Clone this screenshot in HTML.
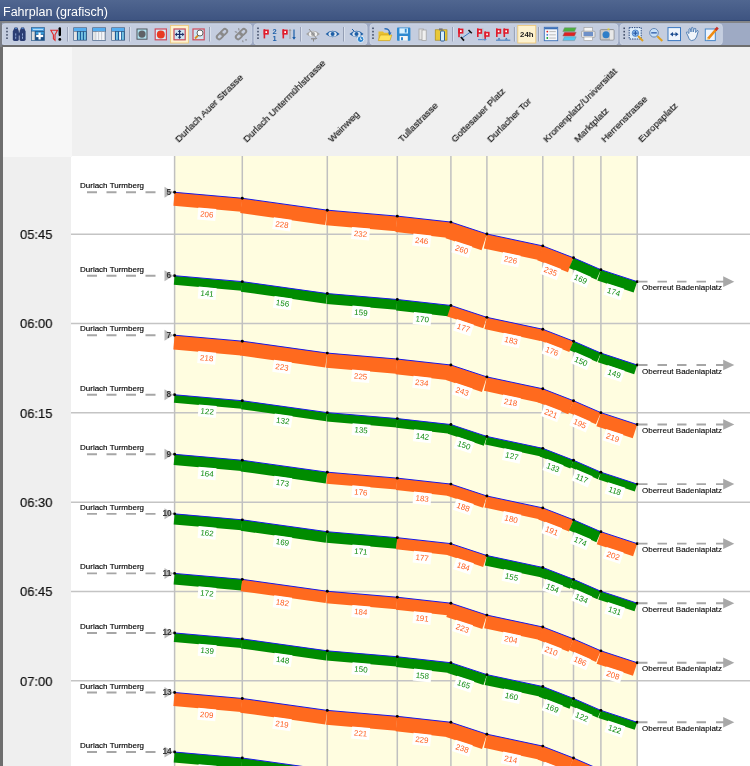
<!DOCTYPE html>
<html><head><meta charset="utf-8"><style>
*{margin:0;padding:0;box-sizing:border-box}
html,body{width:750px;height:766px;overflow:hidden;background:#fff;font-family:"Liberation Sans",sans-serif}
#title{position:absolute;left:0;top:0;width:750px;height:21px;background:linear-gradient(#506690,#3e5481 95%,#2f4570 95%);color:#fff;font-size:12.5px;line-height:25px;padding-left:3px}
#tbline{position:absolute;left:0;top:21px;width:750px;height:2px;background:#838588}
#toolbar{position:absolute;left:0;top:23px;width:750px;height:23px;background:#9eaac4}
#tbbottom{position:absolute;left:0;top:45px;width:750px;height:2px;background:#6e6e6e}
#leftborder{position:absolute;left:0;top:47px;width:3px;height:719px;background:#6e6e6e}
#lefthdr{position:absolute;left:3px;top:47px;width:69px;height:110px;background:#f7f7f7}
#hdr{position:absolute;left:72px;top:47px;width:678px;height:109px;background:#f0f0f0}
#leftaxis{position:absolute;left:3px;top:157px;width:68px;height:609px;background:#efefef}
.st{position:absolute;font-size:9.7px;line-height:12px;white-space:nowrap;color:#111;-webkit-text-stroke:0.18px #111;transform-origin:0 100%;transform:rotate(-45deg);will-change:transform}
.tm{position:absolute;left:20.3px;font-size:13.5px;line-height:16px;color:#101010;transform:scaleX(0.96);transform-origin:0 0;will-change:transform;-webkit-text-stroke:0.2px #101010}
text{font-family:"Liberation Sans",sans-serif}
</style></head><body>
<div id="title"><span style="display:inline-block;will-change:transform">Fahrplan (grafisch)</span></div>
<div id="tbline"></div>
<div id="toolbar"></div>
<svg width="750" height="47" viewBox="0 0 750 47" style="position:absolute;left:0;top:0;will-change:transform">
<rect x="2" y="23.9" width="249.7" height="20.8" rx="3" fill="#c4cddf" stroke="#d2d9e7" stroke-width="0.8"/>
<rect x="254" y="23.9" width="113.0" height="20.8" rx="3" fill="#c4cddf" stroke="#d2d9e7" stroke-width="0.8"/>
<rect x="370" y="23.9" width="247.8" height="20.8" rx="3" fill="#c4cddf" stroke="#d2d9e7" stroke-width="0.8"/>
<rect x="620.2" y="23.9" width="102.1" height="20.8" rx="3" fill="#c4cddf" stroke="#d2d9e7" stroke-width="0.8"/>
<rect x="6.2" y="27.5" width="1.6" height="1.6" fill="#44506a"/>
<rect x="6.2" y="30.8" width="1.6" height="1.6" fill="#44506a"/>
<rect x="6.2" y="34.1" width="1.6" height="1.6" fill="#44506a"/>
<rect x="6.2" y="37.400000000000006" width="1.6" height="1.6" fill="#44506a"/>
<rect x="257.2" y="27.5" width="1.6" height="1.6" fill="#44506a"/>
<rect x="257.2" y="30.8" width="1.6" height="1.6" fill="#44506a"/>
<rect x="257.2" y="34.1" width="1.6" height="1.6" fill="#44506a"/>
<rect x="257.2" y="37.400000000000006" width="1.6" height="1.6" fill="#44506a"/>
<rect x="372.2" y="27.5" width="1.6" height="1.6" fill="#44506a"/>
<rect x="372.2" y="30.8" width="1.6" height="1.6" fill="#44506a"/>
<rect x="372.2" y="34.1" width="1.6" height="1.6" fill="#44506a"/>
<rect x="372.2" y="37.400000000000006" width="1.6" height="1.6" fill="#44506a"/>
<rect x="623.4000000000001" y="27.5" width="1.6" height="1.6" fill="#44506a"/>
<rect x="623.4000000000001" y="30.8" width="1.6" height="1.6" fill="#44506a"/>
<rect x="623.4000000000001" y="34.1" width="1.6" height="1.6" fill="#44506a"/>
<rect x="623.4000000000001" y="37.400000000000006" width="1.6" height="1.6" fill="#44506a"/>
<rect x="67.2" y="27" width="1" height="14.5" fill="#8f9ab0"/><rect x="68.2" y="27" width="0.8" height="14.5" fill="#e0e6f0"/>
<rect x="129.1" y="27" width="1" height="14.5" fill="#8f9ab0"/><rect x="130.1" y="27" width="0.8" height="14.5" fill="#e0e6f0"/>
<rect x="209.1" y="27" width="1" height="14.5" fill="#8f9ab0"/><rect x="210.1" y="27" width="0.8" height="14.5" fill="#e0e6f0"/>
<rect x="300.2" y="27" width="1" height="14.5" fill="#8f9ab0"/><rect x="301.2" y="27" width="0.8" height="14.5" fill="#e0e6f0"/>
<rect x="343.1" y="27" width="1" height="14.5" fill="#8f9ab0"/><rect x="344.1" y="27" width="0.8" height="14.5" fill="#e0e6f0"/>
<rect x="452.2" y="27" width="1" height="14.5" fill="#8f9ab0"/><rect x="453.2" y="27" width="0.8" height="14.5" fill="#e0e6f0"/>
<rect x="513.9" y="27" width="1" height="14.5" fill="#8f9ab0"/><rect x="514.9" y="27" width="0.8" height="14.5" fill="#e0e6f0"/>
<rect x="538.2" y="27" width="1" height="14.5" fill="#8f9ab0"/><rect x="539.2" y="27" width="0.8" height="14.5" fill="#e0e6f0"/>
<g fill="#2b3d73"><path d="M14.6,27.6 L17.4,27.6 L18.8,31 L18.8,39.6 Q18.8,41 17.4,41 L14.4,41 Q12.8,41 12.8,39.6 L12.8,31.5 Z"/><path d="M21.2,27.6 L24,27.6 L25.6,31.5 L25.6,39.6 Q25.6,41 24,41 L21,41 Q19.6,41 19.6,39.6 L19.6,31 Z"/><rect x="18" y="32.5" width="2.4" height="3"/></g><g fill="#8fa8d8"><rect x="15.2" y="33.4" width="1" height="2.2"/><rect x="15.2" y="36.6" width="1" height="2.2"/><rect x="22" y="33.4" width="1" height="2.2"/><rect x="22" y="36.6" width="1" height="2.2"/><rect x="15" y="27.9" width="2" height="1" fill="#4f8ad0"/><rect x="21.6" y="27.9" width="2" height="1" fill="#4f8ad0"/></g>
<g><rect x="31" y="27.2" width="13.8" height="13.6" fill="#2f5e8c"/><rect x="31.7" y="27.8" width="12.4" height="3" fill="#4aa4e8"/><rect x="33" y="28.9" width="10" height="0.9" fill="#c8eaff"/><rect x="31.7" y="31.5" width="3" height="8.6" fill="#dcdcdc"/><rect x="35.5" y="31.5" width="8.6" height="8.6" fill="#1a4f86"/><rect x="35.8" y="31.8" width="3.6" height="2.6" fill="#3a9ad8"/><rect x="40.2" y="31.8" width="3.6" height="2.6" fill="#3a9ad8"/><rect x="38.5" y="32.5" width="2.2" height="7" fill="#fff"/><rect x="36.2" y="34.9" width="7" height="2.2" fill="#fff"/></g>
<g><path d="M50.8,30.2 L57.5,30.2 L55,34.8 L55,40.2 L53.4,38.8 L53.4,34.8 Z" fill="none" stroke="#e02828" stroke-width="1.1"/><rect x="58.6" y="27.2" width="2.4" height="9" rx="1.1" fill="#000"/><circle cx="59.8" cy="39.4" r="1.4" fill="#000"/></g>
<g><rect x="73.3" y="27.4" width="13.6" height="13.2" fill="#3a5a80"/><rect x="73.89999999999999" y="28" width="12.4" height="3" fill="#56aef0"/><rect x="73.89999999999999" y="31.6" width="3" height="8.4" fill="#e4e4e4"/><rect x="77.1" y="31.6" width="9.2" height="8.4" fill="#1a5c9c"/><rect x="78.3" y="31.8" width="1.3" height="8" fill="#9ff0ff"/><rect x="81.3" y="31.8" width="1.3" height="8" fill="#9ff0ff"/><rect x="84.3" y="31.8" width="1.3" height="8" fill="#9ff0ff"/></g>
<g><rect x="92.3" y="27.4" width="13.6" height="13.2" fill="#3a5a80"/><rect x="92.89999999999999" y="28" width="12.4" height="3" fill="#56aef0"/><rect x="92.89999999999999" y="31.6" width="3" height="8.4" fill="#e4e4e4"/><rect x="96.1" y="31.6" width="9.2" height="8.4" fill="#f4f6fa"/><rect x="98.3" y="31.8" width="0.8" height="8" fill="#b8bcc4"/><rect x="101.3" y="31.8" width="0.8" height="8" fill="#b8bcc4"/><rect x="104.3" y="31.8" width="0.8" height="8" fill="#b8bcc4"/></g>
<g><rect x="111.3" y="27.4" width="13.6" height="13.2" fill="#3a5a80"/><rect x="111.89999999999999" y="28" width="12.4" height="3" fill="#56aef0"/><rect x="111.89999999999999" y="31.6" width="3" height="8.4" fill="#e4e4e4"/><rect x="115.1" y="31.6" width="9.2" height="8.4" fill="#1a5c9c"/><rect x="119.1" y="31.8" width="2" height="8" fill="#f4f6fa"/><rect x="116.3" y="31.8" width="1.3" height="8" fill="#9ff0ff"/><rect x="122.3" y="31.8" width="1.3" height="8" fill="#9ff0ff"/></g>
<g><rect x="137" y="29" width="10" height="10.2" fill="#aee0ee" stroke="#50585e" stroke-width="1"/><circle cx="142" cy="34.1" r="3.6" fill="#5e6266"/></g>
<g><rect x="155.2" y="29" width="11.2" height="10.8" fill="#d8eef8" stroke="#d04a5a" stroke-width="1.2"/><circle cx="160.8" cy="34.4" r="4" fill="#e83a22"/></g>
<rect x="170.6" y="25.4" width="17.8" height="17.6" fill="#fdf2cf" stroke="#efc878" stroke-width="0.9"/>
<g><rect x="174" y="29" width="11.2" height="10.8" fill="#cfe6f4" stroke="#c84a5a" stroke-width="1.2"/><path d="M179.6,29.8 L181.4,32 L177.8,32 Z M179.6,39 L181.4,36.8 L177.8,36.8 Z M174.8,34.4 L177,32.6 L177,36.2 Z M184.4,34.4 L182.2,32.6 L182.2,36.2 Z" fill="#1c2e66"/><rect x="179" y="31.5" width="1.2" height="6" fill="#1c2e66"/><rect x="176.5" y="33.8" width="6.2" height="1.2" fill="#1c2e66"/></g>
<g><rect x="193" y="29" width="11.2" height="10.8" fill="#cfe6f4" stroke="#d04a5a" stroke-width="1.2"/><line x1="195" y1="38.5" x2="198" y2="35.5" stroke="#d8901c" stroke-width="1.8"/><circle cx="200" cy="33" r="3" fill="#fff" stroke="#555" stroke-width="0.9"/></g>
<g fill="none" stroke="#8a8a8a" stroke-width="1.9"><rect x="221.7" y="28.6" width="4.6" height="7" rx="2.2" transform="rotate(45 224.0 32.1)"/><rect x="217.7" y="32.6" width="4.6" height="7" rx="2.2" transform="rotate(45 220.0 36.1)"/></g>
<g fill="none" stroke="#8a8a8a" stroke-width="1.9"><rect x="240.7" y="28.6" width="4.6" height="7" rx="2.2" transform="rotate(45 243.0 32.1)"/><rect x="236.7" y="32.6" width="4.6" height="7" rx="2.2" transform="rotate(45 239.0 36.1)"/></g><g stroke="#7c7c7c" stroke-width="0.9"><line x1="234.8" y1="31.7" x2="237.2" y2="32.3"/><line x1="238.7" y1="28.2" x2="239.0" y2="30.5"/><line x1="245.1" y1="39.9" x2="247.0" y2="39.9"/><line x1="242.7" y1="40.4" x2="243.0" y2="42.2"/></g>
<g><rect x="263.6" y="29.2" width="1.6" height="9.2" fill="#e01c2c"/><rect x="263.6" y="29.599999999999998" width="5.2" height="5" fill="#e01c2c"/><rect x="265.40000000000003" y="31.2" width="1.7" height="1.8" fill="#fff"/><text x="274.6" y="34" font-size="7.5" font-weight="bold" text-anchor="middle" fill="#1c5ea8">2</text><text x="274.6" y="40.5" font-size="7.5" font-weight="bold" text-anchor="middle" fill="#1c5ea8">1</text></g>
<g><rect x="282.5" y="29.2" width="1.6" height="9.2" fill="#e01c2c"/><rect x="282.5" y="29.599999999999998" width="5.2" height="5" fill="#e01c2c"/><rect x="284.3" y="31.2" width="1.7" height="1.8" fill="#fff"/><line x1="290" y1="29.5" x2="290" y2="39" stroke="#a0a0a0" stroke-width="1.1"/><path d="M288.4,31 L290,28.8 L291.6,31 Z" fill="#a0a0a0"/><line x1="294" y1="29.5" x2="294" y2="38.5" stroke="#1c5ea8" stroke-width="1.2"/><path d="M292.2,37 L294,39.8 L295.8,37 Z" fill="#1c5ea8"/></g>
<g><path d="M306,34 Q313,27.5 320,34 Q313,40.5 306,34 Z" fill="#a4a4a4"/><ellipse cx="313" cy="34" rx="4.2" ry="2.6" fill="#fff" opacity="0.85"/><circle cx="313" cy="34" r="2" fill="#a4a4a4"/><line x1="309" y1="29" x2="317" y2="39" stroke="#8c8c8c" stroke-width="1"/><rect x="311" y="38.2" width="5" height="1.2" fill="#888"/><rect x="313" y="39" width="1" height="2.5" fill="#888"/></g>
<g><path d="M325.6,34 Q332.6,27.5 339.6,34 Q332.6,40.5 325.6,34 Z" fill="#1d5ea6"/><ellipse cx="332.6" cy="34" rx="4.2" ry="2.6" fill="#fff" opacity="0.85"/><circle cx="332.6" cy="34" r="2" fill="#1d5ea6"/></g>
<g><path d="M349.5,34 Q356.5,27.5 363.5,34 Q356.5,40.5 349.5,34 Z" fill="#1d5ea6"/><ellipse cx="356.5" cy="34" rx="4.2" ry="2.6" fill="#fff" opacity="0.85"/><circle cx="356.5" cy="34" r="2" fill="#1d5ea6"/><line x1="352" y1="29" x2="354" y2="31" stroke="#1d5ea6" stroke-width="1"/><circle cx="360.6" cy="39.2" r="3.3" fill="#2f86d0" stroke="#fff" stroke-width="0.8"/><path d="M360.6,37.4 L360.6,39.4 L362,39.4" stroke="#fff" stroke-width="0.8" fill="none"/></g>
<g><path d="M378.5,31.5 L383,31.5 L384,32.7 L389,32.7 L389,40.5 L378.5,40.5 Z" fill="#e8c030"/><path d="M378.3,40.6 L380.3,35 L391.8,35 L390,40.6 Z" fill="#ffe35a" stroke="#c99a10" stroke-width="0.6"/><path d="M384.5,28.8 Q389.5,28.5 389.8,33.5" fill="none" stroke="#2f6fb8" stroke-width="1.4"/><path d="M387.8,32.6 L391.6,32.6 L389.7,35.6 Z" fill="#2f6fb8"/></g>
<g><rect x="397" y="27.6" width="13.4" height="13.2" rx="0.8" fill="#2f8ad0"/><rect x="399.4" y="28.3" width="8.6" height="5.2" fill="#d6f0ff"/><rect x="404.8" y="28.8" width="1.8" height="3.8" fill="#2f8ad0"/><rect x="399.6" y="36" width="8.2" height="4.8" fill="#f4f4f4"/><rect x="401" y="37.2" width="2" height="3" fill="#2f8ad0"/></g>
<g><rect x="419" y="29" width="4.5" height="10.8" fill="#e4e4e4" stroke="#a4a4a4" stroke-width="0.8"/><rect x="422" y="30" width="4.2" height="10.4" fill="#f0f0f0" stroke="#a4a4a4" stroke-width="0.8"/></g>
<g><rect x="435.2" y="29.8" width="11.8" height="10.4" fill="#e8c838" stroke="#a08010" stroke-width="0.6"/><rect x="439" y="28.4" width="3.6" height="2" fill="#777"/><rect x="440.5" y="31" width="4" height="10" rx="1" fill="#d4efff" stroke="#1e5090" stroke-width="0.9"/></g>
<g><rect x="458.2" y="28.2" width="1.6" height="9" fill="#e01c2c"/><rect x="458.2" y="28.599999999999998" width="5.2" height="5" fill="#e01c2c"/><rect x="460.0" y="30.2" width="1.7" height="1.8" fill="#fff"/><line x1="462" y1="38" x2="470.5" y2="32" stroke="#3878c0" stroke-width="1"/><line x1="460.8" y1="37" x2="464" y2="40.6" stroke="#111" stroke-width="1.6"/><line x1="468.5" y1="30" x2="471.8" y2="33.2" stroke="#111" stroke-width="1.6"/></g>
<g><rect x="477" y="28.4" width="1.6" height="8.6" fill="#e01c2c"/><rect x="477" y="28.799999999999997" width="5.2" height="5" fill="#e01c2c"/><rect x="478.8" y="30.4" width="1.7" height="1.8" fill="#fff"/><rect x="484.4" y="31.4" width="1.6" height="8.6" fill="#e01c2c"/><rect x="484.4" y="31.799999999999997" width="5.2" height="5" fill="#e01c2c"/><rect x="486.2" y="33.4" width="1.7" height="1.8" fill="#fff"/><line x1="478" y1="39.6" x2="485" y2="39.6" stroke="#5a8ed0" stroke-width="1.1"/><path d="M484.5,38.2 L486.8,39.6 L484.5,41 Z" fill="#5a8ed0"/><line x1="482.8" y1="28" x2="482.8" y2="41" stroke="#b0b0b0" stroke-width="0.5"/></g>
<g><rect x="496" y="28.4" width="1.6" height="8.6" fill="#e01c2c"/><rect x="496" y="28.799999999999997" width="5.2" height="5" fill="#e01c2c"/><rect x="497.8" y="30.4" width="1.7" height="1.8" fill="#fff"/><rect x="503.5" y="28.4" width="1.6" height="8.6" fill="#e01c2c"/><rect x="503.5" y="28.799999999999997" width="5.2" height="5" fill="#e01c2c"/><rect x="505.3" y="30.4" width="1.7" height="1.8" fill="#fff"/><line x1="496" y1="40.2" x2="510.3" y2="40.2" stroke="#2f6fb8" stroke-width="0.9"/><path d="M497.5,39.5 L499,37.8 L500.5,39.5 Z M504.8,39.5 L506.3,37.8 L507.8,39.5 Z" fill="#2f6fb8"/></g>
<rect x="517.8" y="25.4" width="18" height="17.6" fill="#fdf2cf" stroke="#efc878" stroke-width="0.9"/><text x="526.8" y="37.4" font-size="7.8" font-weight="bold" text-anchor="middle" fill="#1a1a1a">24h</text>
<g><rect x="544.3" y="27.3" width="13.4" height="13.4" fill="#f4f6fa" stroke="#3c70b8" stroke-width="0.9"/><rect x="544.5" y="27.5" width="13" height="1.8" fill="#3c70b8"/><circle cx="547.3" cy="31.6" r="0.9" fill="#e02020"/><circle cx="547.3" cy="34.8" r="0.9" fill="#3c70d0"/><circle cx="547.3" cy="38" r="0.9" fill="#10a020"/><rect x="549.3" y="31.2" width="6.5" height="0.9" fill="#b4b4b4"/><rect x="549.3" y="34.4" width="6.5" height="0.9" fill="#b4b4b4"/><rect x="549.3" y="37.6" width="6.5" height="0.9" fill="#b4b4b4"/></g>
<g><path d="M564.5,27.7 L576.2,27.7 L574.5,31.5 L562.8,31.5 Z" fill="#4cb040" stroke="#7a8a78" stroke-width="0.5"/><path d="M564.5,32.2 L576.2,32.2 L574.5,36 L562.8,36 Z" fill="#e02020" stroke="#7a7a7a" stroke-width="0.5"/><path d="M564.5,36.8 L576.2,36.8 L574.5,40.6 L562.8,40.6 Z" fill="#50c8f0" stroke="#7a8a9a" stroke-width="0.5"/></g>
<g><rect x="584" y="27.5" width="8.5" height="4" fill="#f4f4f4" stroke="#9a9a9a" stroke-width="0.6"/><rect x="581.5" y="31.2" width="13.5" height="6.2" rx="1" fill="#e4e6ea" stroke="#8a8a8a" stroke-width="0.6"/><rect x="583.5" y="32" width="9.5" height="4" fill="#6e90c8"/><rect x="584" y="37" width="8.5" height="3.6" fill="#fafafa" stroke="#9a9a9a" stroke-width="0.6"/></g>
<g><rect x="600.2" y="29.6" width="13.8" height="10.4" rx="1" fill="#c8c8c8" stroke="#7a7a7a" stroke-width="0.7"/><rect x="610" y="30.2" width="3.5" height="9.4" fill="#e8e8e8"/><circle cx="606" cy="34.8" r="3.5" fill="#2f7ec8"/><rect x="607.5" y="28.5" width="2" height="1.2" fill="#e8d820"/></g>
<g><rect x="629.2" y="27.6" width="12" height="11.4" fill="#dcecfa" stroke="#2a4a80" stroke-width="1" stroke-dasharray="1.4,1"/><circle cx="635.4" cy="33.2" r="3.2" fill="#8fc0ee" stroke="#3a70c0" stroke-width="0.8"/><rect x="634.8" y="31" width="1.2" height="4.4" fill="#2a5aa8"/><rect x="633.2" y="32.6" width="4.4" height="1.2" fill="#2a5aa8"/><line x1="638" y1="36" x2="643" y2="41" stroke="#e0a020" stroke-width="1.9"/></g>
<g><circle cx="654" cy="32.8" r="4.3" fill="#c8e0f8" stroke="#5a80b0" stroke-width="0.9"/><rect x="651.2" y="32.2" width="5.6" height="1.3" fill="#2a5aa8"/><line x1="657.3" y1="36.3" x2="662.3" y2="41" stroke="#e0a020" stroke-width="2"/></g>
<g><rect x="668" y="27.6" width="12.5" height="13" fill="#eef4fc" stroke="#3a78c0" stroke-width="1"/><path d="M670,34.2 L673,32 L673,36.4 Z M678.5,34.2 L675.5,32 L675.5,36.4 Z" fill="#1a4a90"/><rect x="672" y="33.7" width="4.5" height="1" fill="#1a4a90"/></g>
<g><path d="M688,36 L686.5,33 Q686,32 687.2,31.8 L689,33.5 L689,29 Q689.8,28 690.6,29 L691,32 L691.4,27.8 Q692.2,27 693,27.8 L693.2,32 L694.2,28.5 Q695,27.8 695.8,28.7 L695.6,32.5 L697,30.5 Q698,30.3 698.2,31.2 L696.5,37 Q695,40.8 691.5,40.6 Q689,40.5 688,36 Z" fill="#f0f4fa" stroke="#4a78b0" stroke-width="0.9"/></g>
<g><rect x="705.3" y="29" width="10" height="11.6" fill="#eef4fc" stroke="#4a88c8" stroke-width="1"/><line x1="708" y1="38.8" x2="716.5" y2="29" stroke="#f08a10" stroke-width="2.6"/><line x1="715.5" y1="30.2" x2="717.8" y2="27.6" stroke="#c8302a" stroke-width="2.6"/><path d="M706.4,40.4 L707.2,37.4 L709,39 Z" fill="#e8d090"/></g>
</svg>
<div id="tbbottom"></div>
<div style="position:absolute;left:0;top:21px;width:2px;height:26px;background:#7a7e86"></div>
<div id="leftborder"></div>
<div id="lefthdr"></div>
<div id="hdr">
</div>
<div class="st" style="left:180.9px;top:132.8px">Durlach Auer Strasse</div>
<div class="st" style="left:248.60000000000002px;top:132.8px">Durlach Untermühlstrasse</div>
<div class="st" style="left:333.6px;top:132.8px">Weinweg</div>
<div class="st" style="left:403.6px;top:132.8px">Tullastrasse</div>
<div class="st" style="left:457.2px;top:132.8px">Gottesauer Platz</div>
<div class="st" style="left:493.2px;top:132.8px">Durlacher Tor</div>
<div class="st" style="left:549.0999999999999px;top:132.8px">Kronenplatz/Universität</div>
<div class="st" style="left:579.8px;top:132.8px">Marktplatz</div>
<div class="st" style="left:607.1999999999999px;top:132.8px">Herrenstrasse</div>
<div class="st" style="left:643.5px;top:132.8px">Europaplatz</div>
<div id="leftaxis"></div>
<div class="tm" style="top:226.8px">05:45</div>
<div class="tm" style="top:315.8px">06:00</div>
<div class="tm" style="top:405.8px">06:15</div>
<div class="tm" style="top:494.8px">06:30</div>
<div class="tm" style="top:583.8px">06:45</div>
<div class="tm" style="top:673.8px">07:00</div>
<svg width="750" height="766" viewBox="0 0 750 766" style="position:absolute;left:0;top:0;will-change:transform">
<rect x="175" y="156" width="462" height="610" fill="#fffde0"/>
<line x1="71" y1="234.20" x2="750" y2="234.20" stroke="#c4c4c4" stroke-width="1.5"/>
<line x1="71" y1="323.52" x2="750" y2="323.52" stroke="#c4c4c4" stroke-width="1.5"/>
<line x1="71" y1="412.84" x2="750" y2="412.84" stroke="#c4c4c4" stroke-width="1.5"/>
<line x1="71" y1="502.16" x2="750" y2="502.16" stroke="#c4c4c4" stroke-width="1.5"/>
<line x1="71" y1="591.48" x2="750" y2="591.48" stroke="#c4c4c4" stroke-width="1.5"/>
<line x1="71" y1="680.80" x2="750" y2="680.80" stroke="#c4c4c4" stroke-width="1.5"/>
<line x1="174.60" y1="156" x2="174.60" y2="766" stroke="#c0c0c0" stroke-width="1.5"/>
<line x1="242.30" y1="156" x2="242.30" y2="766" stroke="#c0c0c0" stroke-width="1.5"/>
<line x1="327.30" y1="156" x2="327.30" y2="766" stroke="#c0c0c0" stroke-width="1.5"/>
<line x1="397.30" y1="156" x2="397.30" y2="766" stroke="#c0c0c0" stroke-width="1.5"/>
<line x1="450.90" y1="156" x2="450.90" y2="766" stroke="#c0c0c0" stroke-width="1.5"/>
<line x1="486.90" y1="156" x2="486.90" y2="766" stroke="#c0c0c0" stroke-width="1.5"/>
<line x1="542.80" y1="156" x2="542.80" y2="766" stroke="#c0c0c0" stroke-width="1.5"/>
<line x1="573.50" y1="156" x2="573.50" y2="766" stroke="#c0c0c0" stroke-width="1.5"/>
<line x1="600.90" y1="156" x2="600.90" y2="766" stroke="#c0c0c0" stroke-width="1.5"/>
<line x1="637.20" y1="156" x2="637.20" y2="766" stroke="#c0c0c0" stroke-width="1.5"/>
<polygon points="174.60,192.32 242.30,198.27 241.12,211.68 173.42,205.73" fill="#ff6a1e"/>
<polygon points="242.30,198.27 327.30,210.18 325.23,224.94 240.23,213.03" fill="#ff6a1e"/>
<polygon points="327.30,210.18 397.30,216.14 396.01,231.24 326.01,225.29" fill="#ff6a1e"/>
<polygon points="397.30,216.14 450.90,222.09 449.12,238.07 395.52,232.12" fill="#ff6a1e"/>
<polygon points="450.90,222.09 486.90,234.00 481.56,250.13 445.56,238.22" fill="#ff6a1e"/>
<polygon points="486.90,234.00 542.80,245.91 539.72,260.36 483.82,248.45" fill="#ff6a1e"/>
<polygon points="542.80,245.91 573.50,257.82 567.94,272.14 537.24,260.23" fill="#ff6a1e"/>
<polygon points="573.50,257.82 600.90,269.73 596.50,279.86 569.10,267.95" fill="#008c00"/>
<polygon points="600.90,269.73 637.20,281.64 633.65,292.44 597.35,280.53" fill="#008c00"/>
<polyline points="174.60,192.32 242.30,198.27 327.30,210.18 397.30,216.14 450.90,222.09 486.90,234.00 542.80,245.91 573.50,257.82 600.90,269.73 637.20,281.64" fill="none" stroke="#1818e8" stroke-width="1"/>
<circle cx="174.60" cy="192.32" r="1.45" fill="#000"/>
<circle cx="242.30" cy="198.27" r="1.45" fill="#000"/>
<circle cx="327.30" cy="210.18" r="1.45" fill="#000"/>
<circle cx="397.30" cy="216.14" r="1.45" fill="#000"/>
<circle cx="450.90" cy="222.09" r="1.45" fill="#000"/>
<circle cx="486.90" cy="234.00" r="1.45" fill="#000"/>
<circle cx="542.80" cy="245.91" r="1.45" fill="#000"/>
<circle cx="573.50" cy="257.82" r="1.45" fill="#000"/>
<circle cx="600.90" cy="269.73" r="1.45" fill="#000"/>
<circle cx="637.20" cy="281.64" r="1.45" fill="#000"/>
<polygon points="164.5,186.82 173.5,192.32 164.5,197.82" fill="#b8b8b8"/>
<text x="168.7" y="194.62" font-size="8.3" font-weight="bold" fill="#3a3a3a" text-anchor="middle">5</text>
<line x1="87" y1="192.32" x2="162" y2="192.32" stroke="#a6a6a6" stroke-width="1.9" stroke-dasharray="10,9.5"/>
<text x="80" y="188.32" font-size="8" fill="#000" stroke="#000" stroke-width="0.15">Durlach Turmberg</text>
<line x1="638" y1="281.64" x2="724" y2="281.64" stroke="#a6a6a6" stroke-width="1.9" stroke-dasharray="9.5,10"/>
<polygon points="723.2,276.34 734.3,281.64 723.2,286.94" fill="#a8a8a8"/>
<text x="642" y="290.14" font-size="8" fill="#000" stroke="#000" stroke-width="0.1">Oberreut Badeniaplatz</text>
<polygon points="174.60,275.68 242.30,281.64 241.49,290.82 173.79,284.86" fill="#008c00"/>
<polygon points="242.30,281.64 327.30,293.55 325.89,303.64 240.89,291.74" fill="#008c00"/>
<polygon points="327.30,293.55 397.30,299.50 396.42,309.86 326.42,303.90" fill="#008c00"/>
<polygon points="397.30,299.50 450.90,305.46 449.67,316.50 396.07,310.54" fill="#008c00"/>
<polygon points="450.90,305.46 486.90,317.37 483.27,328.35 447.27,316.44" fill="#ff6a1e"/>
<polygon points="486.90,317.37 542.80,329.28 540.31,340.97 484.41,329.06" fill="#ff6a1e"/>
<polygon points="542.80,329.28 573.50,341.18 569.34,351.91 538.64,340.00" fill="#ff6a1e"/>
<polygon points="573.50,341.18 600.90,353.09 596.99,362.09 569.59,350.18" fill="#008c00"/>
<polygon points="600.90,353.09 637.20,365.00 634.16,374.26 597.86,362.35" fill="#008c00"/>
<polyline points="174.60,275.68 242.30,281.64 327.30,293.55 397.30,299.50 450.90,305.46 486.90,317.37 542.80,329.28 573.50,341.18 600.90,353.09 637.20,365.00" fill="none" stroke="#1818e8" stroke-width="1"/>
<circle cx="174.60" cy="275.68" r="1.45" fill="#000"/>
<circle cx="242.30" cy="281.64" r="1.45" fill="#000"/>
<circle cx="327.30" cy="293.55" r="1.45" fill="#000"/>
<circle cx="397.30" cy="299.50" r="1.45" fill="#000"/>
<circle cx="450.90" cy="305.46" r="1.45" fill="#000"/>
<circle cx="486.90" cy="317.37" r="1.45" fill="#000"/>
<circle cx="542.80" cy="329.28" r="1.45" fill="#000"/>
<circle cx="573.50" cy="341.18" r="1.45" fill="#000"/>
<circle cx="600.90" cy="353.09" r="1.45" fill="#000"/>
<circle cx="637.20" cy="365.00" r="1.45" fill="#000"/>
<polygon points="164.5,270.18 173.5,275.68 164.5,281.18" fill="#b8b8b8"/>
<text x="168.7" y="277.98" font-size="8.3" font-weight="bold" fill="#3a3a3a" text-anchor="middle">6</text>
<line x1="87" y1="275.68" x2="162" y2="275.68" stroke="#a6a6a6" stroke-width="1.9" stroke-dasharray="10,9.5"/>
<text x="80" y="271.68" font-size="8" fill="#000" stroke="#000" stroke-width="0.15">Durlach Turmberg</text>
<line x1="638" y1="365.00" x2="724" y2="365.00" stroke="#a6a6a6" stroke-width="1.9" stroke-dasharray="9.5,10"/>
<polygon points="723.2,359.70 734.3,365.00 723.2,370.30" fill="#a8a8a8"/>
<text x="642" y="373.50" font-size="8" fill="#000" stroke="#000" stroke-width="0.1">Oberreut Badeniaplatz</text>
<polygon points="174.60,335.23 242.30,341.18 241.05,355.38 173.35,349.42" fill="#ff6a1e"/>
<polygon points="242.30,341.18 327.30,353.09 325.28,367.53 240.28,355.62" fill="#ff6a1e"/>
<polygon points="327.30,353.09 397.30,359.05 396.05,373.70 326.05,367.75" fill="#ff6a1e"/>
<polygon points="397.30,359.05 450.90,365.00 449.21,380.20 395.61,374.25" fill="#ff6a1e"/>
<polygon points="450.90,365.00 486.90,376.91 481.91,391.99 445.91,380.08" fill="#ff6a1e"/>
<polygon points="486.90,376.91 542.80,388.82 539.83,402.76 483.93,390.85" fill="#ff6a1e"/>
<polygon points="542.80,388.82 573.50,400.73 568.28,414.20 537.58,402.29" fill="#ff6a1e"/>
<polygon points="573.50,400.73 600.90,412.64 595.82,424.33 568.42,412.42" fill="#ff6a1e"/>
<polygon points="600.90,412.64 637.20,424.55 632.74,438.15 596.44,426.24" fill="#ff6a1e"/>
<polyline points="174.60,335.23 242.30,341.18 327.30,353.09 397.30,359.05 450.90,365.00 486.90,376.91 542.80,388.82 573.50,400.73 600.90,412.64 637.20,424.55" fill="none" stroke="#1818e8" stroke-width="1"/>
<circle cx="174.60" cy="335.23" r="1.45" fill="#000"/>
<circle cx="242.30" cy="341.18" r="1.45" fill="#000"/>
<circle cx="327.30" cy="353.09" r="1.45" fill="#000"/>
<circle cx="397.30" cy="359.05" r="1.45" fill="#000"/>
<circle cx="450.90" cy="365.00" r="1.45" fill="#000"/>
<circle cx="486.90" cy="376.91" r="1.45" fill="#000"/>
<circle cx="542.80" cy="388.82" r="1.45" fill="#000"/>
<circle cx="573.50" cy="400.73" r="1.45" fill="#000"/>
<circle cx="600.90" cy="412.64" r="1.45" fill="#000"/>
<circle cx="637.20" cy="424.55" r="1.45" fill="#000"/>
<polygon points="164.5,329.73 173.5,335.23 164.5,340.73" fill="#b8b8b8"/>
<text x="168.7" y="337.53" font-size="8.3" font-weight="bold" fill="#3a3a3a" text-anchor="middle">7</text>
<line x1="87" y1="335.23" x2="162" y2="335.23" stroke="#a6a6a6" stroke-width="1.9" stroke-dasharray="10,9.5"/>
<text x="80" y="331.23" font-size="8" fill="#000" stroke="#000" stroke-width="0.15">Durlach Turmberg</text>
<line x1="638" y1="424.55" x2="724" y2="424.55" stroke="#a6a6a6" stroke-width="1.9" stroke-dasharray="9.5,10"/>
<polygon points="723.2,419.25 734.3,424.55 723.2,429.85" fill="#a8a8a8"/>
<text x="642" y="433.05" font-size="8" fill="#000" stroke="#000" stroke-width="0.1">Oberreut Badeniaplatz</text>
<polygon points="174.60,394.78 242.30,400.73 241.60,408.67 173.90,402.72" fill="#008c00"/>
<polygon points="242.30,400.73 327.30,412.64 326.10,421.18 241.10,409.28" fill="#008c00"/>
<polygon points="327.30,412.64 397.30,418.60 396.55,427.39 326.55,421.43" fill="#008c00"/>
<polygon points="397.30,418.60 450.90,424.55 449.88,433.77 396.28,427.82" fill="#008c00"/>
<polygon points="450.90,424.55 486.90,436.46 483.82,445.77 447.82,433.86" fill="#008c00"/>
<polygon points="486.90,436.46 542.80,448.37 541.07,456.49 485.17,444.58" fill="#008c00"/>
<polygon points="542.80,448.37 573.50,460.28 570.36,468.38 539.66,456.47" fill="#008c00"/>
<polygon points="573.50,460.28 600.90,472.19 597.85,479.20 570.45,467.29" fill="#008c00"/>
<polygon points="600.90,472.19 637.20,484.10 634.80,491.43 598.50,479.52" fill="#008c00"/>
<polyline points="174.60,394.78 242.30,400.73 327.30,412.64 397.30,418.60 450.90,424.55 486.90,436.46 542.80,448.37 573.50,460.28 600.90,472.19 637.20,484.10" fill="none" stroke="#1818e8" stroke-width="1"/>
<circle cx="174.60" cy="394.78" r="1.45" fill="#000"/>
<circle cx="242.30" cy="400.73" r="1.45" fill="#000"/>
<circle cx="327.30" cy="412.64" r="1.45" fill="#000"/>
<circle cx="397.30" cy="418.60" r="1.45" fill="#000"/>
<circle cx="450.90" cy="424.55" r="1.45" fill="#000"/>
<circle cx="486.90" cy="436.46" r="1.45" fill="#000"/>
<circle cx="542.80" cy="448.37" r="1.45" fill="#000"/>
<circle cx="573.50" cy="460.28" r="1.45" fill="#000"/>
<circle cx="600.90" cy="472.19" r="1.45" fill="#000"/>
<circle cx="637.20" cy="484.10" r="1.45" fill="#000"/>
<polygon points="164.5,389.28 173.5,394.78 164.5,400.28" fill="#b8b8b8"/>
<text x="168.7" y="397.08" font-size="8.3" font-weight="bold" fill="#3a3a3a" text-anchor="middle">8</text>
<line x1="87" y1="394.78" x2="162" y2="394.78" stroke="#a6a6a6" stroke-width="1.9" stroke-dasharray="10,9.5"/>
<text x="80" y="390.78" font-size="8" fill="#000" stroke="#000" stroke-width="0.15">Durlach Turmberg</text>
<line x1="638" y1="484.10" x2="724" y2="484.10" stroke="#a6a6a6" stroke-width="1.9" stroke-dasharray="9.5,10"/>
<polygon points="723.2,478.80 734.3,484.10 723.2,489.40" fill="#a8a8a8"/>
<text x="642" y="492.60" font-size="8" fill="#000" stroke="#000" stroke-width="0.1">Oberreut Badeniaplatz</text>
<polygon points="174.60,454.32 242.30,460.28 241.36,470.96 173.66,465.00" fill="#008c00"/>
<polygon points="242.30,460.28 327.30,472.19 325.73,483.39 240.73,471.48" fill="#008c00"/>
<polygon points="327.30,472.19 397.30,478.14 396.32,489.60 326.32,483.65" fill="#ff6a1e"/>
<polygon points="397.30,478.14 450.90,484.10 449.58,495.99 395.98,490.03" fill="#ff6a1e"/>
<polygon points="450.90,484.10 486.90,496.01 483.04,507.67 447.04,495.76" fill="#ff6a1e"/>
<polygon points="486.90,496.01 542.80,507.92 540.35,519.42 484.45,507.51" fill="#ff6a1e"/>
<polygon points="542.80,507.92 573.50,519.83 568.99,531.46 538.29,519.55" fill="#ff6a1e"/>
<polygon points="573.50,519.83 600.90,531.74 596.37,542.16 568.97,530.26" fill="#008c00"/>
<polygon points="600.90,531.74 637.20,543.64 633.08,556.19 596.78,544.28" fill="#ff6a1e"/>
<polyline points="174.60,454.32 242.30,460.28 327.30,472.19 397.30,478.14 450.90,484.10 486.90,496.01 542.80,507.92 573.50,519.83 600.90,531.74 637.20,543.64" fill="none" stroke="#1818e8" stroke-width="1"/>
<circle cx="174.60" cy="454.32" r="1.45" fill="#000"/>
<circle cx="242.30" cy="460.28" r="1.45" fill="#000"/>
<circle cx="327.30" cy="472.19" r="1.45" fill="#000"/>
<circle cx="397.30" cy="478.14" r="1.45" fill="#000"/>
<circle cx="450.90" cy="484.10" r="1.45" fill="#000"/>
<circle cx="486.90" cy="496.01" r="1.45" fill="#000"/>
<circle cx="542.80" cy="507.92" r="1.45" fill="#000"/>
<circle cx="573.50" cy="519.83" r="1.45" fill="#000"/>
<circle cx="600.90" cy="531.74" r="1.45" fill="#000"/>
<circle cx="637.20" cy="543.64" r="1.45" fill="#000"/>
<polygon points="164.5,448.82 173.5,454.32 164.5,459.82" fill="#b8b8b8"/>
<text x="168.7" y="456.62" font-size="8.3" font-weight="bold" fill="#3a3a3a" text-anchor="middle">9</text>
<line x1="87" y1="454.32" x2="162" y2="454.32" stroke="#a6a6a6" stroke-width="1.9" stroke-dasharray="10,9.5"/>
<text x="80" y="450.32" font-size="8" fill="#000" stroke="#000" stroke-width="0.15">Durlach Turmberg</text>
<line x1="638" y1="543.64" x2="724" y2="543.64" stroke="#a6a6a6" stroke-width="1.9" stroke-dasharray="9.5,10"/>
<polygon points="723.2,538.34 734.3,543.64 723.2,548.94" fill="#a8a8a8"/>
<text x="642" y="552.14" font-size="8" fill="#000" stroke="#000" stroke-width="0.1">Oberreut Badeniaplatz</text>
<polygon points="174.60,513.87 242.30,519.83 241.37,530.37 173.67,524.42" fill="#008c00"/>
<polygon points="242.30,519.83 327.30,531.74 325.77,542.67 240.77,530.76" fill="#008c00"/>
<polygon points="327.30,531.74 397.30,537.69 396.35,548.83 326.35,542.87" fill="#008c00"/>
<polygon points="397.30,537.69 450.90,543.64 449.62,555.14 396.02,549.19" fill="#ff6a1e"/>
<polygon points="450.90,543.64 486.90,555.55 483.12,566.97 447.12,555.06" fill="#ff6a1e"/>
<polygon points="486.90,555.55 542.80,567.46 540.69,577.37 484.79,565.46" fill="#008c00"/>
<polygon points="542.80,567.46 573.50,579.37 569.86,588.76 539.16,576.85" fill="#008c00"/>
<polygon points="573.50,579.37 600.90,591.28 597.41,599.31 570.01,587.40" fill="#008c00"/>
<polygon points="600.90,591.28 637.20,603.19 634.53,611.33 598.23,599.42" fill="#008c00"/>
<polyline points="174.60,513.87 242.30,519.83 327.30,531.74 397.30,537.69 450.90,543.64 486.90,555.55 542.80,567.46 573.50,579.37 600.90,591.28 637.20,603.19" fill="none" stroke="#1818e8" stroke-width="1"/>
<circle cx="174.60" cy="513.87" r="1.45" fill="#000"/>
<circle cx="242.30" cy="519.83" r="1.45" fill="#000"/>
<circle cx="327.30" cy="531.74" r="1.45" fill="#000"/>
<circle cx="397.30" cy="537.69" r="1.45" fill="#000"/>
<circle cx="450.90" cy="543.64" r="1.45" fill="#000"/>
<circle cx="486.90" cy="555.55" r="1.45" fill="#000"/>
<circle cx="542.80" cy="567.46" r="1.45" fill="#000"/>
<circle cx="573.50" cy="579.37" r="1.45" fill="#000"/>
<circle cx="600.90" cy="591.28" r="1.45" fill="#000"/>
<circle cx="637.20" cy="603.19" r="1.45" fill="#000"/>
<polygon points="164.5,508.37 173.5,513.87 164.5,519.37" fill="#b8b8b8"/>
<text x="167" y="516.17" font-size="8.3" font-weight="bold" fill="#3a3a3a" text-anchor="middle">10</text>
<line x1="87" y1="513.87" x2="162" y2="513.87" stroke="#a6a6a6" stroke-width="1.9" stroke-dasharray="10,9.5"/>
<text x="80" y="509.87" font-size="8" fill="#000" stroke="#000" stroke-width="0.15">Durlach Turmberg</text>
<line x1="638" y1="603.19" x2="724" y2="603.19" stroke="#a6a6a6" stroke-width="1.9" stroke-dasharray="9.5,10"/>
<polygon points="723.2,597.89 734.3,603.19 723.2,608.49" fill="#a8a8a8"/>
<text x="642" y="611.69" font-size="8" fill="#000" stroke="#000" stroke-width="0.1">Oberreut Badeniaplatz</text>
<polygon points="174.60,573.42 242.30,579.37 241.32,590.57 173.62,584.62" fill="#008c00"/>
<polygon points="242.30,579.37 327.30,591.28 325.65,603.06 240.65,591.15" fill="#ff6a1e"/>
<polygon points="327.30,591.28 397.30,597.24 396.28,609.22 326.28,603.26" fill="#ff6a1e"/>
<polygon points="397.30,597.24 450.90,603.19 449.52,615.60 395.92,609.64" fill="#ff6a1e"/>
<polygon points="450.90,603.19 486.90,615.10 482.32,628.94 446.32,617.03" fill="#ff6a1e"/>
<polygon points="486.90,615.10 542.80,627.01 540.02,640.05 484.12,628.14" fill="#ff6a1e"/>
<polygon points="542.80,627.01 573.50,638.92 568.54,651.72 537.84,639.81" fill="#ff6a1e"/>
<polygon points="573.50,638.92 600.90,650.83 596.05,661.98 568.65,650.07" fill="#ff6a1e"/>
<polygon points="600.90,650.83 637.20,662.74 632.96,675.66 596.66,663.75" fill="#ff6a1e"/>
<polyline points="174.60,573.42 242.30,579.37 327.30,591.28 397.30,597.24 450.90,603.19 486.90,615.10 542.80,627.01 573.50,638.92 600.90,650.83 637.20,662.74" fill="none" stroke="#1818e8" stroke-width="1"/>
<circle cx="174.60" cy="573.42" r="1.45" fill="#000"/>
<circle cx="242.30" cy="579.37" r="1.45" fill="#000"/>
<circle cx="327.30" cy="591.28" r="1.45" fill="#000"/>
<circle cx="397.30" cy="597.24" r="1.45" fill="#000"/>
<circle cx="450.90" cy="603.19" r="1.45" fill="#000"/>
<circle cx="486.90" cy="615.10" r="1.45" fill="#000"/>
<circle cx="542.80" cy="627.01" r="1.45" fill="#000"/>
<circle cx="573.50" cy="638.92" r="1.45" fill="#000"/>
<circle cx="600.90" cy="650.83" r="1.45" fill="#000"/>
<circle cx="637.20" cy="662.74" r="1.45" fill="#000"/>
<polygon points="164.5,567.92 173.5,573.42 164.5,578.92" fill="#b8b8b8"/>
<text x="167" y="575.72" font-size="8.3" font-weight="bold" fill="#3a3a3a" text-anchor="middle">11</text>
<line x1="87" y1="573.42" x2="162" y2="573.42" stroke="#a6a6a6" stroke-width="1.9" stroke-dasharray="10,9.5"/>
<text x="80" y="569.42" font-size="8" fill="#000" stroke="#000" stroke-width="0.15">Durlach Turmberg</text>
<line x1="638" y1="662.74" x2="724" y2="662.74" stroke="#a6a6a6" stroke-width="1.9" stroke-dasharray="9.5,10"/>
<polygon points="723.2,657.44 734.3,662.74 723.2,668.04" fill="#a8a8a8"/>
<text x="642" y="671.24" font-size="8" fill="#000" stroke="#000" stroke-width="0.1">Oberreut Badeniaplatz</text>
<polygon points="174.60,632.96 242.30,638.92 241.50,647.97 173.80,642.01" fill="#008c00"/>
<polygon points="242.30,638.92 327.30,650.83 325.96,660.41 240.96,648.50" fill="#008c00"/>
<polygon points="327.30,650.83 397.30,656.78 396.47,666.55 326.47,660.60" fill="#008c00"/>
<polygon points="397.30,656.78 450.90,662.74 449.76,673.00 396.16,667.05" fill="#008c00"/>
<polygon points="450.90,662.74 486.90,674.65 483.51,684.89 447.51,672.98" fill="#008c00"/>
<polygon points="486.90,674.65 542.80,686.56 540.62,696.79 484.72,684.88" fill="#008c00"/>
<polygon points="542.80,686.56 573.50,698.47 569.51,708.76 538.81,696.86" fill="#008c00"/>
<polygon points="573.50,698.47 600.90,710.38 597.72,717.69 570.32,705.78" fill="#008c00"/>
<polygon points="600.90,710.38 637.20,722.29 634.71,729.86 598.41,717.95" fill="#008c00"/>
<polyline points="174.60,632.96 242.30,638.92 327.30,650.83 397.30,656.78 450.90,662.74 486.90,674.65 542.80,686.56 573.50,698.47 600.90,710.38 637.20,722.29" fill="none" stroke="#1818e8" stroke-width="1"/>
<circle cx="174.60" cy="632.96" r="1.45" fill="#000"/>
<circle cx="242.30" cy="638.92" r="1.45" fill="#000"/>
<circle cx="327.30" cy="650.83" r="1.45" fill="#000"/>
<circle cx="397.30" cy="656.78" r="1.45" fill="#000"/>
<circle cx="450.90" cy="662.74" r="1.45" fill="#000"/>
<circle cx="486.90" cy="674.65" r="1.45" fill="#000"/>
<circle cx="542.80" cy="686.56" r="1.45" fill="#000"/>
<circle cx="573.50" cy="698.47" r="1.45" fill="#000"/>
<circle cx="600.90" cy="710.38" r="1.45" fill="#000"/>
<circle cx="637.20" cy="722.29" r="1.45" fill="#000"/>
<polygon points="164.5,627.46 173.5,632.96 164.5,638.46" fill="#b8b8b8"/>
<text x="167" y="635.26" font-size="8.3" font-weight="bold" fill="#3a3a3a" text-anchor="middle">12</text>
<line x1="87" y1="632.96" x2="162" y2="632.96" stroke="#a6a6a6" stroke-width="1.9" stroke-dasharray="10,9.5"/>
<text x="80" y="628.96" font-size="8" fill="#000" stroke="#000" stroke-width="0.15">Durlach Turmberg</text>
<line x1="638" y1="722.29" x2="724" y2="722.29" stroke="#a6a6a6" stroke-width="1.9" stroke-dasharray="9.5,10"/>
<polygon points="723.2,716.99 734.3,722.29 723.2,727.59" fill="#a8a8a8"/>
<text x="642" y="730.79" font-size="8" fill="#000" stroke="#000" stroke-width="0.1">Oberreut Badeniaplatz</text>
<polygon points="174.60,692.51 242.30,698.47 241.10,712.07 173.40,706.12" fill="#ff6a1e"/>
<polygon points="242.30,698.47 327.30,710.38 325.31,724.55 240.31,712.64" fill="#ff6a1e"/>
<polygon points="327.30,710.38 397.30,716.33 396.08,730.72 326.08,724.77" fill="#ff6a1e"/>
<polygon points="397.30,716.33 450.90,722.29 449.25,737.16 395.65,731.21" fill="#ff6a1e"/>
<polygon points="450.90,722.29 486.90,734.19 482.01,748.96 446.01,737.05" fill="#ff6a1e"/>
<polygon points="486.90,734.19 542.80,746.10 539.89,759.78 483.99,747.87" fill="#ff6a1e"/>
<polygon points="542.80,746.10 573.50,758.01 568.30,771.42 537.60,759.51" fill="#ff6a1e"/>
<polygon points="573.50,758.01 600.90,769.92 595.69,781.91 568.29,770.00" fill="#ff6a1e"/>
<polygon points="600.90,769.92 637.20,781.83 632.82,795.18 596.52,783.28" fill="#ff6a1e"/>
<polyline points="174.60,692.51 242.30,698.47 327.30,710.38 397.30,716.33 450.90,722.29 486.90,734.19 542.80,746.10 573.50,758.01 600.90,769.92 637.20,781.83" fill="none" stroke="#1818e8" stroke-width="1"/>
<circle cx="174.60" cy="692.51" r="1.45" fill="#000"/>
<circle cx="242.30" cy="698.47" r="1.45" fill="#000"/>
<circle cx="327.30" cy="710.38" r="1.45" fill="#000"/>
<circle cx="397.30" cy="716.33" r="1.45" fill="#000"/>
<circle cx="450.90" cy="722.29" r="1.45" fill="#000"/>
<circle cx="486.90" cy="734.19" r="1.45" fill="#000"/>
<circle cx="542.80" cy="746.10" r="1.45" fill="#000"/>
<circle cx="573.50" cy="758.01" r="1.45" fill="#000"/>
<circle cx="600.90" cy="769.92" r="1.45" fill="#000"/>
<circle cx="637.20" cy="781.83" r="1.45" fill="#000"/>
<polygon points="164.5,687.01 173.5,692.51 164.5,698.01" fill="#b8b8b8"/>
<text x="167" y="694.81" font-size="8.3" font-weight="bold" fill="#3a3a3a" text-anchor="middle">13</text>
<line x1="87" y1="692.51" x2="162" y2="692.51" stroke="#a6a6a6" stroke-width="1.9" stroke-dasharray="10,9.5"/>
<text x="80" y="688.51" font-size="8" fill="#000" stroke="#000" stroke-width="0.15">Durlach Turmberg</text>
<line x1="638" y1="781.83" x2="724" y2="781.83" stroke="#a6a6a6" stroke-width="1.9" stroke-dasharray="9.5,10"/>
<polygon points="723.2,776.53 734.3,781.83 723.2,787.13" fill="#a8a8a8"/>
<text x="642" y="790.33" font-size="8" fill="#000" stroke="#000" stroke-width="0.1">Oberreut Badeniaplatz</text>
<polygon points="174.60,752.06 242.30,758.01 241.38,768.43 173.68,762.48" fill="#008c00"/>
<polygon points="242.30,758.01 327.30,769.92 325.78,780.80 240.78,768.89" fill="#008c00"/>
<polygon points="327.30,769.92 397.30,775.88 396.36,786.95 326.36,780.99" fill="#008c00"/>
<polygon points="397.30,775.88 450.90,781.83 449.64,793.20 396.04,787.25" fill="#ff6a1e"/>
<polygon points="450.90,781.83 486.90,793.74 483.20,804.91 447.20,793.00" fill="#ff6a1e"/>
<polygon points="486.90,793.74 542.80,805.65 540.48,816.52 484.58,804.61" fill="#008c00"/>
<polygon points="542.80,805.65 573.50,817.56 569.60,827.61 538.90,815.71" fill="#008c00"/>
<polygon points="573.50,817.56 600.90,829.47 596.99,838.46 569.59,826.55" fill="#008c00"/>
<polygon points="600.90,829.47 637.20,841.38 634.14,850.69 597.84,838.79" fill="#008c00"/>
<polyline points="174.60,752.06 242.30,758.01 327.30,769.92 397.30,775.88 450.90,781.83 486.90,793.74 542.80,805.65 573.50,817.56 600.90,829.47 637.20,841.38" fill="none" stroke="#1818e8" stroke-width="1"/>
<circle cx="174.60" cy="752.06" r="1.45" fill="#000"/>
<circle cx="242.30" cy="758.01" r="1.45" fill="#000"/>
<circle cx="327.30" cy="769.92" r="1.45" fill="#000"/>
<circle cx="397.30" cy="775.88" r="1.45" fill="#000"/>
<circle cx="450.90" cy="781.83" r="1.45" fill="#000"/>
<circle cx="486.90" cy="793.74" r="1.45" fill="#000"/>
<circle cx="542.80" cy="805.65" r="1.45" fill="#000"/>
<circle cx="573.50" cy="817.56" r="1.45" fill="#000"/>
<circle cx="600.90" cy="829.47" r="1.45" fill="#000"/>
<circle cx="637.20" cy="841.38" r="1.45" fill="#000"/>
<polygon points="164.5,746.56 173.5,752.06 164.5,757.56" fill="#b8b8b8"/>
<text x="167" y="754.36" font-size="8.3" font-weight="bold" fill="#3a3a3a" text-anchor="middle">14</text>
<line x1="87" y1="752.06" x2="162" y2="752.06" stroke="#a6a6a6" stroke-width="1.9" stroke-dasharray="10,9.5"/>
<text x="80" y="748.06" font-size="8" fill="#000" stroke="#000" stroke-width="0.15">Durlach Turmberg</text>
<line x1="638" y1="841.38" x2="724" y2="841.38" stroke="#a6a6a6" stroke-width="1.9" stroke-dasharray="9.5,10"/>
<polygon points="723.2,836.08 734.3,841.38 723.2,846.68" fill="#a8a8a8"/>
<text x="642" y="849.88" font-size="8" fill="#000" stroke="#000" stroke-width="0.1">Oberreut Badeniaplatz</text>
<g transform="translate(206.79,214.19) rotate(5.03)"><rect x="-9" y="-6" width="18" height="12" fill="#ffffff"/><text x="0" y="2.9" text-anchor="middle" font-size="8" fill="#ff6022">206</text></g>
<g transform="translate(281.97,224.43) rotate(7.98)"><rect x="-9" y="-6" width="18" height="12" fill="#ffffff"/><text x="0" y="2.9" text-anchor="middle" font-size="8" fill="#ff6022">228</text></g>
<g transform="translate(360.55,233.75) rotate(4.86)"><rect x="-9" y="-6" width="18" height="12" fill="#ffffff"/><text x="0" y="2.9" text-anchor="middle" font-size="8" fill="#ff6022">232</text></g>
<g transform="translate(421.72,240.56) rotate(6.34)"><rect x="-9" y="-6" width="18" height="12" fill="#ffffff"/><text x="0" y="2.9" text-anchor="middle" font-size="8" fill="#ff6022">246</text></g>
<g transform="translate(461.84,249.40) rotate(18.31)"><rect x="-9" y="-6" width="18" height="12" fill="#ffffff"/><text x="0" y="2.9" text-anchor="middle" font-size="8" fill="#ff6022">260</text></g>
<g transform="translate(510.63,259.78) rotate(12.03)"><rect x="-9" y="-6" width="18" height="12" fill="#ffffff"/><text x="0" y="2.9" text-anchor="middle" font-size="8" fill="#ff6022">226</text></g>
<g transform="translate(550.61,271.31) rotate(21.20)"><rect x="-9" y="-6" width="18" height="12" fill="#ffffff"/><text x="0" y="2.9" text-anchor="middle" font-size="8" fill="#ff6022">235</text></g>
<g transform="translate(580.60,278.95) rotate(23.49)"><rect x="-9" y="-6" width="18" height="12" fill="#ffffff"/><text x="0" y="2.9" text-anchor="middle" font-size="8" fill="#0e8c0e">169</text></g>
<g transform="translate(613.79,291.71) rotate(18.16)"><rect x="-9" y="-6" width="18" height="12" fill="#ffffff"/><text x="0" y="2.9" text-anchor="middle" font-size="8" fill="#0e8c0e">174</text></g>
<g transform="translate(207.16,293.32) rotate(5.03)"><rect x="-9" y="-6" width="18" height="12" fill="#ffffff"/><text x="0" y="2.9" text-anchor="middle" font-size="8" fill="#0e8c0e">141</text></g>
<g transform="translate(282.62,303.14) rotate(7.98)"><rect x="-9" y="-6" width="18" height="12" fill="#ffffff"/><text x="0" y="2.9" text-anchor="middle" font-size="8" fill="#0e8c0e">156</text></g>
<g transform="translate(360.95,312.36) rotate(4.86)"><rect x="-9" y="-6" width="18" height="12" fill="#ffffff"/><text x="0" y="2.9" text-anchor="middle" font-size="8" fill="#0e8c0e">159</text></g>
<g transform="translate(422.27,318.99) rotate(6.34)"><rect x="-9" y="-6" width="18" height="12" fill="#ffffff"/><text x="0" y="2.9" text-anchor="middle" font-size="8" fill="#0e8c0e">170</text></g>
<g transform="translate(463.54,327.62) rotate(18.31)"><rect x="-9" y="-6" width="18" height="12" fill="#ffffff"/><text x="0" y="2.9" text-anchor="middle" font-size="8" fill="#ff6022">177</text></g>
<g transform="translate(511.21,340.40) rotate(12.03)"><rect x="-9" y="-6" width="18" height="12" fill="#ffffff"/><text x="0" y="2.9" text-anchor="middle" font-size="8" fill="#ff6022">183</text></g>
<g transform="translate(552.00,351.08) rotate(21.20)"><rect x="-9" y="-6" width="18" height="12" fill="#ffffff"/><text x="0" y="2.9" text-anchor="middle" font-size="8" fill="#ff6022">176</text></g>
<g transform="translate(581.10,361.17) rotate(23.49)"><rect x="-9" y="-6" width="18" height="12" fill="#ffffff"/><text x="0" y="2.9" text-anchor="middle" font-size="8" fill="#0e8c0e">150</text></g>
<g transform="translate(614.30,373.53) rotate(18.16)"><rect x="-9" y="-6" width="18" height="12" fill="#ffffff"/><text x="0" y="2.9" text-anchor="middle" font-size="8" fill="#0e8c0e">149</text></g>
<g transform="translate(206.72,357.88) rotate(5.03)"><rect x="-9" y="-6" width="18" height="12" fill="#ffffff"/><text x="0" y="2.9" text-anchor="middle" font-size="8" fill="#ff6022">218</text></g>
<g transform="translate(282.01,367.02) rotate(7.98)"><rect x="-9" y="-6" width="18" height="12" fill="#ffffff"/><text x="0" y="2.9" text-anchor="middle" font-size="8" fill="#ff6022">223</text></g>
<g transform="translate(360.59,376.20) rotate(4.86)"><rect x="-9" y="-6" width="18" height="12" fill="#ffffff"/><text x="0" y="2.9" text-anchor="middle" font-size="8" fill="#ff6022">225</text></g>
<g transform="translate(421.80,382.69) rotate(6.34)"><rect x="-9" y="-6" width="18" height="12" fill="#ffffff"/><text x="0" y="2.9" text-anchor="middle" font-size="8" fill="#ff6022">234</text></g>
<g transform="translate(462.18,391.26) rotate(18.31)"><rect x="-9" y="-6" width="18" height="12" fill="#ffffff"/><text x="0" y="2.9" text-anchor="middle" font-size="8" fill="#ff6022">243</text></g>
<g transform="translate(510.73,402.18) rotate(12.03)"><rect x="-9" y="-6" width="18" height="12" fill="#ffffff"/><text x="0" y="2.9" text-anchor="middle" font-size="8" fill="#ff6022">218</text></g>
<g transform="translate(550.94,413.37) rotate(21.20)"><rect x="-9" y="-6" width="18" height="12" fill="#ffffff"/><text x="0" y="2.9" text-anchor="middle" font-size="8" fill="#ff6022">221</text></g>
<g transform="translate(579.93,423.42) rotate(23.49)"><rect x="-9" y="-6" width="18" height="12" fill="#ffffff"/><text x="0" y="2.9" text-anchor="middle" font-size="8" fill="#ff6022">195</text></g>
<g transform="translate(612.87,437.42) rotate(18.16)"><rect x="-9" y="-6" width="18" height="12" fill="#ffffff"/><text x="0" y="2.9" text-anchor="middle" font-size="8" fill="#ff6022">219</text></g>
<g transform="translate(207.27,411.18) rotate(5.03)"><rect x="-9" y="-6" width="18" height="12" fill="#ffffff"/><text x="0" y="2.9" text-anchor="middle" font-size="8" fill="#0e8c0e">122</text></g>
<g transform="translate(282.84,420.68) rotate(7.98)"><rect x="-9" y="-6" width="18" height="12" fill="#ffffff"/><text x="0" y="2.9" text-anchor="middle" font-size="8" fill="#0e8c0e">132</text></g>
<g transform="translate(361.09,429.89) rotate(4.86)"><rect x="-9" y="-6" width="18" height="12" fill="#ffffff"/><text x="0" y="2.9" text-anchor="middle" font-size="8" fill="#0e8c0e">135</text></g>
<g transform="translate(422.47,436.26) rotate(6.34)"><rect x="-9" y="-6" width="18" height="12" fill="#ffffff"/><text x="0" y="2.9" text-anchor="middle" font-size="8" fill="#0e8c0e">142</text></g>
<g transform="translate(464.09,445.03) rotate(18.31)"><rect x="-9" y="-6" width="18" height="12" fill="#ffffff"/><text x="0" y="2.9" text-anchor="middle" font-size="8" fill="#0e8c0e">150</text></g>
<g transform="translate(511.97,455.91) rotate(12.03)"><rect x="-9" y="-6" width="18" height="12" fill="#ffffff"/><text x="0" y="2.9" text-anchor="middle" font-size="8" fill="#0e8c0e">127</text></g>
<g transform="translate(553.02,467.56) rotate(21.20)"><rect x="-9" y="-6" width="18" height="12" fill="#ffffff"/><text x="0" y="2.9" text-anchor="middle" font-size="8" fill="#0e8c0e">133</text></g>
<g transform="translate(581.96,478.29) rotate(23.49)"><rect x="-9" y="-6" width="18" height="12" fill="#ffffff"/><text x="0" y="2.9" text-anchor="middle" font-size="8" fill="#0e8c0e">117</text></g>
<g transform="translate(614.93,490.70) rotate(18.16)"><rect x="-9" y="-6" width="18" height="12" fill="#ffffff"/><text x="0" y="2.9" text-anchor="middle" font-size="8" fill="#0e8c0e">118</text></g>
<g transform="translate(207.03,473.46) rotate(5.03)"><rect x="-9" y="-6" width="18" height="12" fill="#ffffff"/><text x="0" y="2.9" text-anchor="middle" font-size="8" fill="#0e8c0e">164</text></g>
<g transform="translate(282.47,482.88) rotate(7.98)"><rect x="-9" y="-6" width="18" height="12" fill="#ffffff"/><text x="0" y="2.9" text-anchor="middle" font-size="8" fill="#0e8c0e">173</text></g>
<g transform="translate(360.86,492.11) rotate(4.86)"><rect x="-9" y="-6" width="18" height="12" fill="#ffffff"/><text x="0" y="2.9" text-anchor="middle" font-size="8" fill="#ff6022">176</text></g>
<g transform="translate(422.17,498.47) rotate(6.34)"><rect x="-9" y="-6" width="18" height="12" fill="#ffffff"/><text x="0" y="2.9" text-anchor="middle" font-size="8" fill="#ff6022">183</text></g>
<g transform="translate(463.31,506.94) rotate(18.31)"><rect x="-9" y="-6" width="18" height="12" fill="#ffffff"/><text x="0" y="2.9" text-anchor="middle" font-size="8" fill="#ff6022">188</text></g>
<g transform="translate(511.25,518.85) rotate(12.03)"><rect x="-9" y="-6" width="18" height="12" fill="#ffffff"/><text x="0" y="2.9" text-anchor="middle" font-size="8" fill="#ff6022">180</text></g>
<g transform="translate(551.65,530.64) rotate(21.20)"><rect x="-9" y="-6" width="18" height="12" fill="#ffffff"/><text x="0" y="2.9" text-anchor="middle" font-size="8" fill="#ff6022">191</text></g>
<g transform="translate(580.47,541.25) rotate(23.49)"><rect x="-9" y="-6" width="18" height="12" fill="#ffffff"/><text x="0" y="2.9" text-anchor="middle" font-size="8" fill="#0e8c0e">174</text></g>
<g transform="translate(613.22,555.46) rotate(18.16)"><rect x="-9" y="-6" width="18" height="12" fill="#ffffff"/><text x="0" y="2.9" text-anchor="middle" font-size="8" fill="#ff6022">202</text></g>
<g transform="translate(207.04,532.87) rotate(5.03)"><rect x="-9" y="-6" width="18" height="12" fill="#ffffff"/><text x="0" y="2.9" text-anchor="middle" font-size="8" fill="#0e8c0e">162</text></g>
<g transform="translate(282.50,542.17) rotate(7.98)"><rect x="-9" y="-6" width="18" height="12" fill="#ffffff"/><text x="0" y="2.9" text-anchor="middle" font-size="8" fill="#0e8c0e">169</text></g>
<g transform="translate(360.89,551.33) rotate(4.86)"><rect x="-9" y="-6" width="18" height="12" fill="#ffffff"/><text x="0" y="2.9" text-anchor="middle" font-size="8" fill="#0e8c0e">171</text></g>
<g transform="translate(422.22,557.63) rotate(6.34)"><rect x="-9" y="-6" width="18" height="12" fill="#ffffff"/><text x="0" y="2.9" text-anchor="middle" font-size="8" fill="#ff6022">177</text></g>
<g transform="translate(463.40,566.24) rotate(18.31)"><rect x="-9" y="-6" width="18" height="12" fill="#ffffff"/><text x="0" y="2.9" text-anchor="middle" font-size="8" fill="#ff6022">184</text></g>
<g transform="translate(511.59,576.80) rotate(12.03)"><rect x="-9" y="-6" width="18" height="12" fill="#ffffff"/><text x="0" y="2.9" text-anchor="middle" font-size="8" fill="#0e8c0e">155</text></g>
<g transform="translate(552.52,587.93) rotate(21.20)"><rect x="-9" y="-6" width="18" height="12" fill="#ffffff"/><text x="0" y="2.9" text-anchor="middle" font-size="8" fill="#0e8c0e">154</text></g>
<g transform="translate(581.52,598.40) rotate(23.49)"><rect x="-9" y="-6" width="18" height="12" fill="#ffffff"/><text x="0" y="2.9" text-anchor="middle" font-size="8" fill="#0e8c0e">134</text></g>
<g transform="translate(614.67,610.60) rotate(18.16)"><rect x="-9" y="-6" width="18" height="12" fill="#ffffff"/><text x="0" y="2.9" text-anchor="middle" font-size="8" fill="#0e8c0e">131</text></g>
<g transform="translate(206.98,593.07) rotate(5.03)"><rect x="-9" y="-6" width="18" height="12" fill="#ffffff"/><text x="0" y="2.9" text-anchor="middle" font-size="8" fill="#0e8c0e">172</text></g>
<g transform="translate(282.39,602.55) rotate(7.98)"><rect x="-9" y="-6" width="18" height="12" fill="#ffffff"/><text x="0" y="2.9" text-anchor="middle" font-size="8" fill="#ff6022">182</text></g>
<g transform="translate(360.81,611.72) rotate(4.86)"><rect x="-9" y="-6" width="18" height="12" fill="#ffffff"/><text x="0" y="2.9" text-anchor="middle" font-size="8" fill="#ff6022">184</text></g>
<g transform="translate(422.11,618.09) rotate(6.34)"><rect x="-9" y="-6" width="18" height="12" fill="#ffffff"/><text x="0" y="2.9" text-anchor="middle" font-size="8" fill="#ff6022">191</text></g>
<g transform="translate(462.59,628.21) rotate(18.31)"><rect x="-9" y="-6" width="18" height="12" fill="#ffffff"/><text x="0" y="2.9" text-anchor="middle" font-size="8" fill="#ff6022">223</text></g>
<g transform="translate(510.93,639.48) rotate(12.03)"><rect x="-9" y="-6" width="18" height="12" fill="#ffffff"/><text x="0" y="2.9" text-anchor="middle" font-size="8" fill="#ff6022">204</text></g>
<g transform="translate(551.20,650.89) rotate(21.20)"><rect x="-9" y="-6" width="18" height="12" fill="#ffffff"/><text x="0" y="2.9" text-anchor="middle" font-size="8" fill="#ff6022">210</text></g>
<g transform="translate(580.16,661.07) rotate(23.49)"><rect x="-9" y="-6" width="18" height="12" fill="#ffffff"/><text x="0" y="2.9" text-anchor="middle" font-size="8" fill="#ff6022">186</text></g>
<g transform="translate(613.10,674.93) rotate(18.16)"><rect x="-9" y="-6" width="18" height="12" fill="#ffffff"/><text x="0" y="2.9" text-anchor="middle" font-size="8" fill="#ff6022">208</text></g>
<g transform="translate(207.17,650.47) rotate(5.03)"><rect x="-9" y="-6" width="18" height="12" fill="#ffffff"/><text x="0" y="2.9" text-anchor="middle" font-size="8" fill="#0e8c0e">139</text></g>
<g transform="translate(282.69,659.90) rotate(7.98)"><rect x="-9" y="-6" width="18" height="12" fill="#ffffff"/><text x="0" y="2.9" text-anchor="middle" font-size="8" fill="#0e8c0e">148</text></g>
<g transform="translate(361.00,669.06) rotate(4.86)"><rect x="-9" y="-6" width="18" height="12" fill="#ffffff"/><text x="0" y="2.9" text-anchor="middle" font-size="8" fill="#0e8c0e">150</text></g>
<g transform="translate(422.35,675.49) rotate(6.34)"><rect x="-9" y="-6" width="18" height="12" fill="#ffffff"/><text x="0" y="2.9" text-anchor="middle" font-size="8" fill="#0e8c0e">158</text></g>
<g transform="translate(463.79,684.15) rotate(18.31)"><rect x="-9" y="-6" width="18" height="12" fill="#ffffff"/><text x="0" y="2.9" text-anchor="middle" font-size="8" fill="#0e8c0e">165</text></g>
<g transform="translate(511.52,696.21) rotate(12.03)"><rect x="-9" y="-6" width="18" height="12" fill="#ffffff"/><text x="0" y="2.9" text-anchor="middle" font-size="8" fill="#0e8c0e">160</text></g>
<g transform="translate(552.17,707.94) rotate(21.20)"><rect x="-9" y="-6" width="18" height="12" fill="#ffffff"/><text x="0" y="2.9" text-anchor="middle" font-size="8" fill="#0e8c0e">169</text></g>
<g transform="translate(581.83,716.78) rotate(23.49)"><rect x="-9" y="-6" width="18" height="12" fill="#ffffff"/><text x="0" y="2.9" text-anchor="middle" font-size="8" fill="#0e8c0e">122</text></g>
<g transform="translate(614.85,729.13) rotate(18.16)"><rect x="-9" y="-6" width="18" height="12" fill="#ffffff"/><text x="0" y="2.9" text-anchor="middle" font-size="8" fill="#0e8c0e">122</text></g>
<g transform="translate(206.77,714.58) rotate(5.03)"><rect x="-9" y="-6" width="18" height="12" fill="#ffffff"/><text x="0" y="2.9" text-anchor="middle" font-size="8" fill="#ff6022">209</text></g>
<g transform="translate(282.05,724.04) rotate(7.98)"><rect x="-9" y="-6" width="18" height="12" fill="#ffffff"/><text x="0" y="2.9" text-anchor="middle" font-size="8" fill="#ff6022">219</text></g>
<g transform="translate(360.61,733.23) rotate(4.86)"><rect x="-9" y="-6" width="18" height="12" fill="#ffffff"/><text x="0" y="2.9" text-anchor="middle" font-size="8" fill="#ff6022">221</text></g>
<g transform="translate(421.84,739.65) rotate(6.34)"><rect x="-9" y="-6" width="18" height="12" fill="#ffffff"/><text x="0" y="2.9" text-anchor="middle" font-size="8" fill="#ff6022">229</text></g>
<g transform="translate(462.29,748.23) rotate(18.31)"><rect x="-9" y="-6" width="18" height="12" fill="#ffffff"/><text x="0" y="2.9" text-anchor="middle" font-size="8" fill="#ff6022">238</text></g>
<g transform="translate(510.79,759.21) rotate(12.03)"><rect x="-9" y="-6" width="18" height="12" fill="#ffffff"/><text x="0" y="2.9" text-anchor="middle" font-size="8" fill="#ff6022">214</text></g>
<g transform="translate(550.96,770.59) rotate(21.20)"><rect x="-9" y="-6" width="18" height="12" fill="#ffffff"/><text x="0" y="2.9" text-anchor="middle" font-size="8" fill="#ff6022">220</text></g>
<g transform="translate(579.80,781.00) rotate(23.49)"><rect x="-9" y="-6" width="18" height="12" fill="#ffffff"/><text x="0" y="2.9" text-anchor="middle" font-size="8" fill="#ff6022">200</text></g>
<g transform="translate(612.95,794.46) rotate(18.16)"><rect x="-9" y="-6" width="18" height="12" fill="#ffffff"/><text x="0" y="2.9" text-anchor="middle" font-size="8" fill="#ff6022">215</text></g>
<g transform="translate(207.05,770.93) rotate(5.03)"><rect x="-9" y="-6" width="18" height="12" fill="#ffffff"/><text x="0" y="2.9" text-anchor="middle" font-size="8" fill="#0e8c0e">160</text></g>
<g transform="translate(282.51,780.29) rotate(7.98)"><rect x="-9" y="-6" width="18" height="12" fill="#ffffff"/><text x="0" y="2.9" text-anchor="middle" font-size="8" fill="#0e8c0e">168</text></g>
<g transform="translate(360.89,789.45) rotate(4.86)"><rect x="-9" y="-6" width="18" height="12" fill="#ffffff"/><text x="0" y="2.9" text-anchor="middle" font-size="8" fill="#0e8c0e">170</text></g>
<g transform="translate(422.23,795.69) rotate(6.34)"><rect x="-9" y="-6" width="18" height="12" fill="#ffffff"/><text x="0" y="2.9" text-anchor="middle" font-size="8" fill="#ff6022">175</text></g>
<g transform="translate(463.48,804.18) rotate(18.31)"><rect x="-9" y="-6" width="18" height="12" fill="#ffffff"/><text x="0" y="2.9" text-anchor="middle" font-size="8" fill="#ff6022">180</text></g>
<g transform="translate(511.39,815.94) rotate(12.03)"><rect x="-9" y="-6" width="18" height="12" fill="#ffffff"/><text x="0" y="2.9" text-anchor="middle" font-size="8" fill="#0e8c0e">170</text></g>
<g transform="translate(552.26,826.79) rotate(21.20)"><rect x="-9" y="-6" width="18" height="12" fill="#ffffff"/><text x="0" y="2.9" text-anchor="middle" font-size="8" fill="#0e8c0e">165</text></g>
<g transform="translate(581.10,837.55) rotate(23.49)"><rect x="-9" y="-6" width="18" height="12" fill="#ffffff"/><text x="0" y="2.9" text-anchor="middle" font-size="8" fill="#0e8c0e">150</text></g>
<g transform="translate(614.28,849.97) rotate(18.16)"><rect x="-9" y="-6" width="18" height="12" fill="#ffffff"/><text x="0" y="2.9" text-anchor="middle" font-size="8" fill="#0e8c0e">150</text></g>
</svg>
</body></html>
